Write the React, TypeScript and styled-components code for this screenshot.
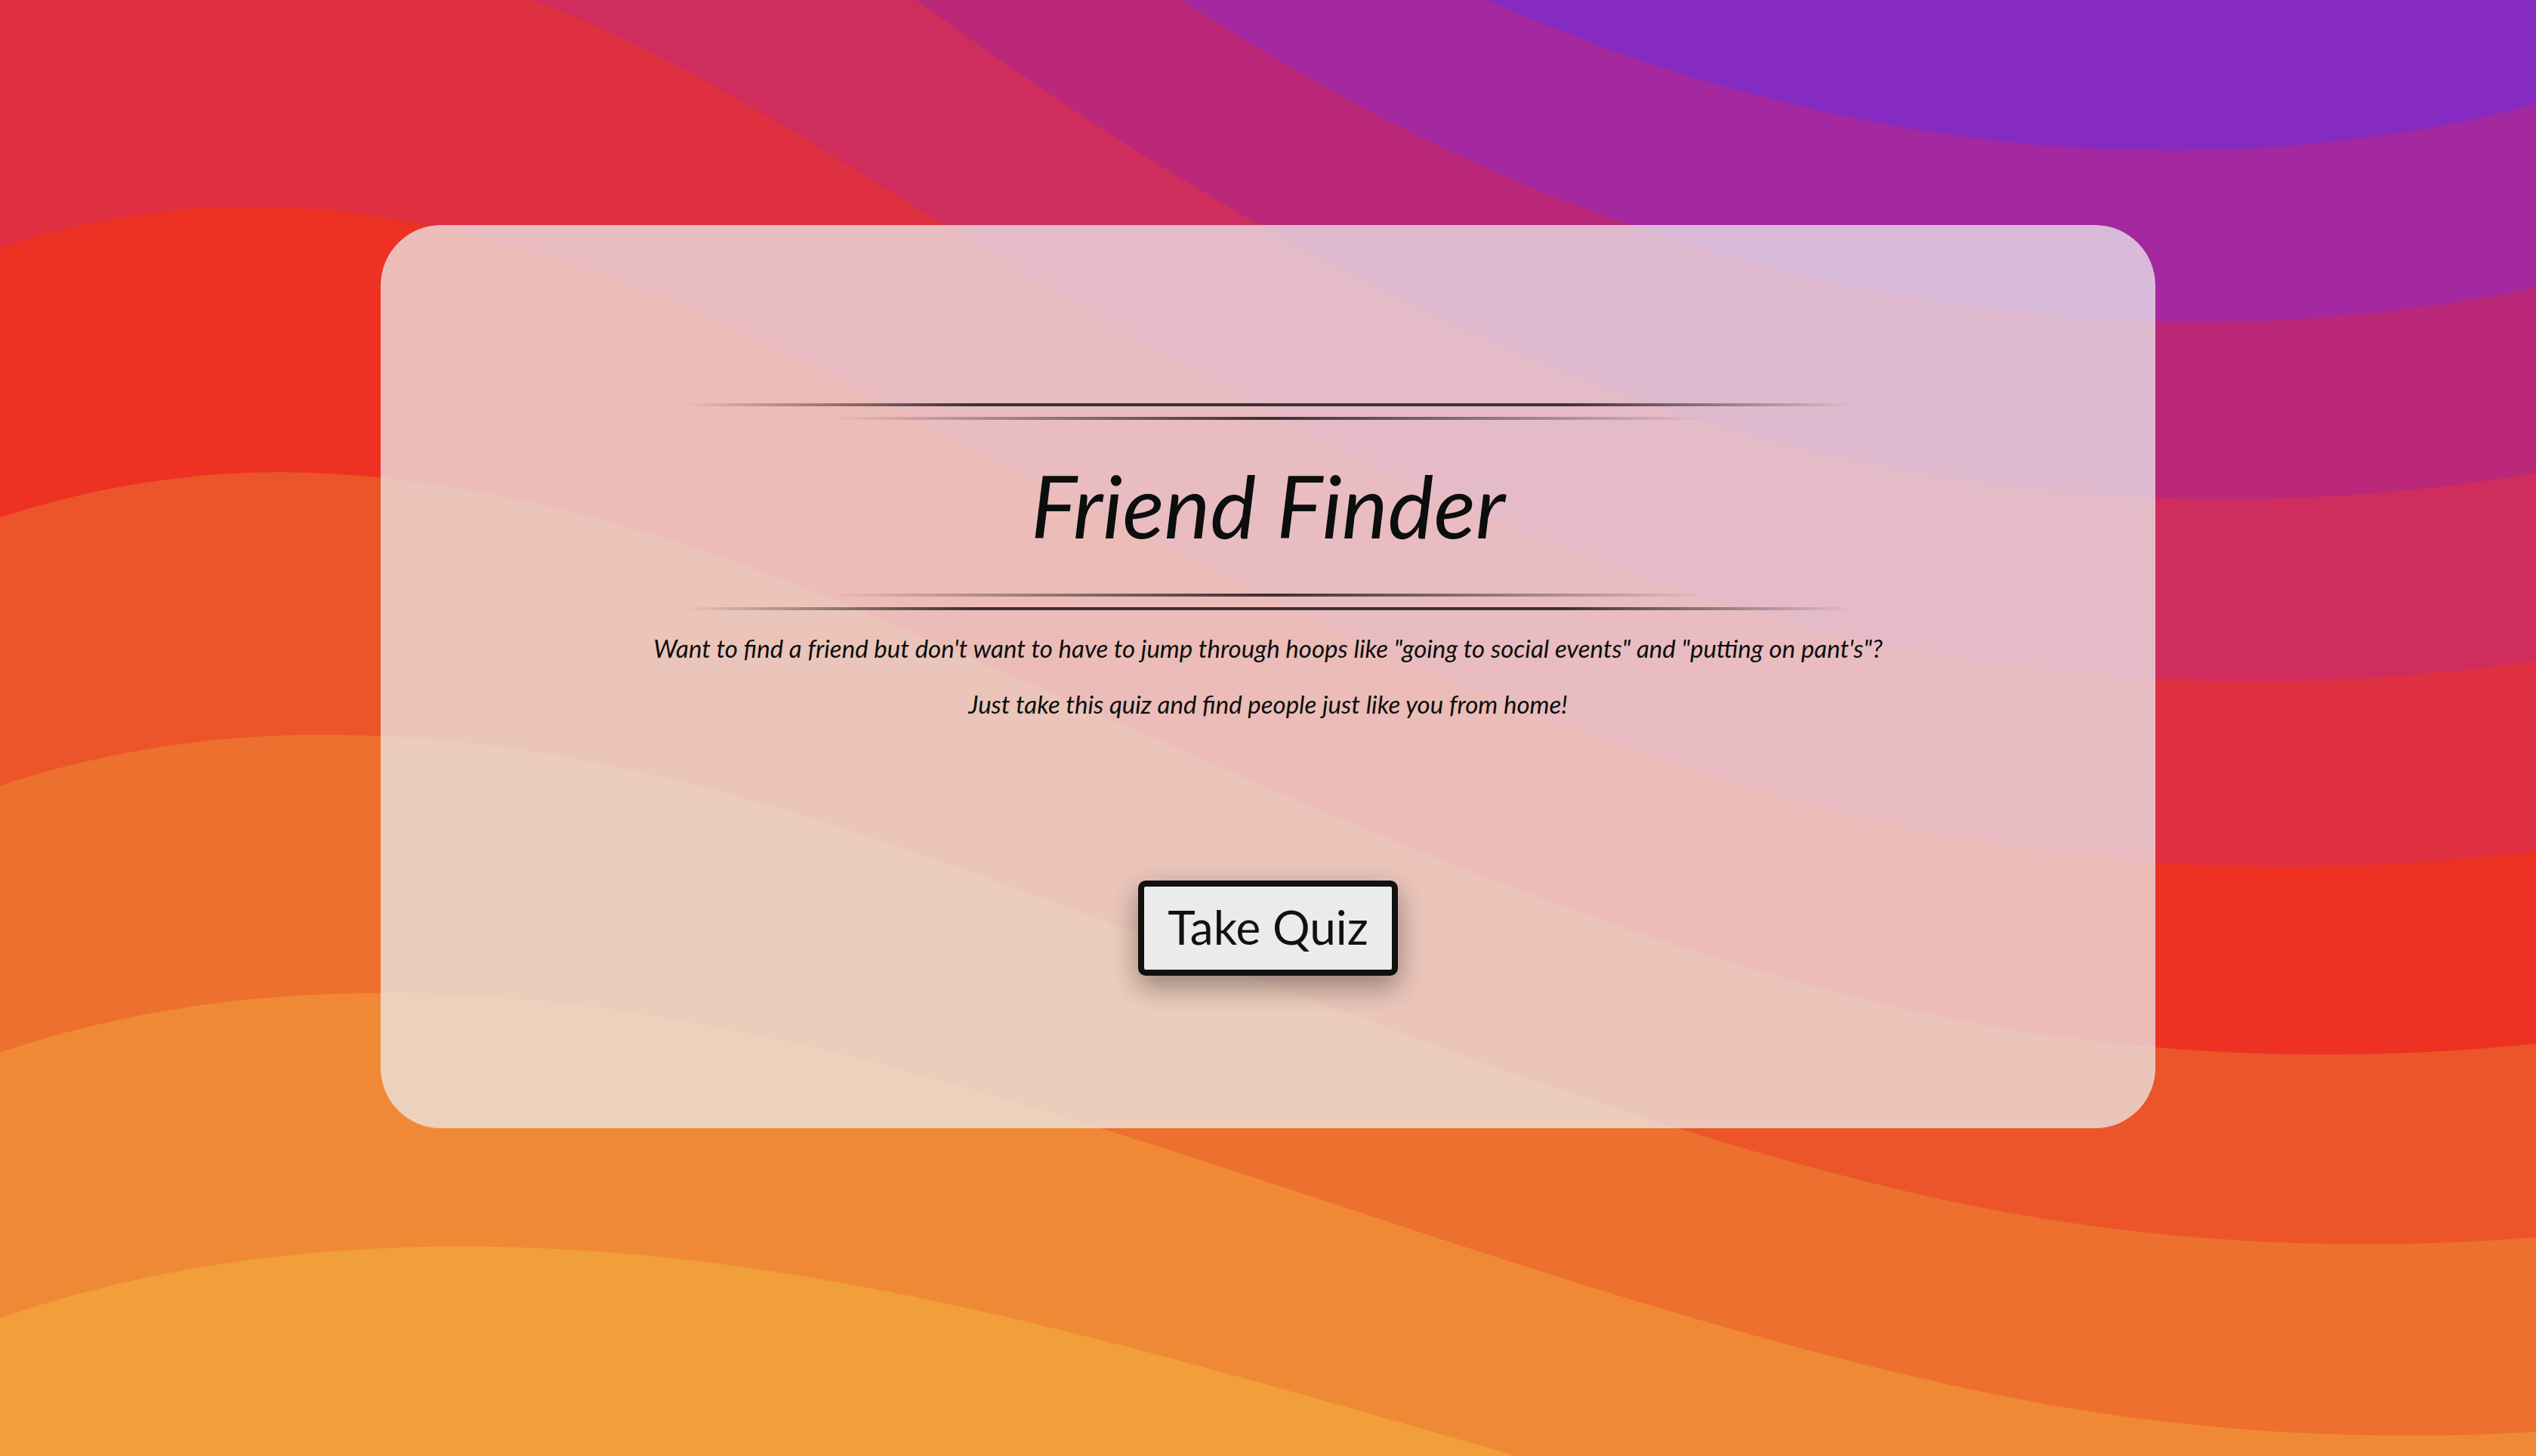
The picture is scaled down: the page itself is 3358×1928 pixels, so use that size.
import React from "react";
import styled, { createGlobalStyle } from "styled-components";

const GlobalStyle = createGlobalStyle`
  *, *::before, *::after { box-sizing: border-box; }
  body { margin: 0; }
`;

const Page = styled.div`
  display: grid;
  grid-template-columns: minmax(0, 1fr);
  grid-template-rows: minmax(100vh, auto);
  background: #f08935;
  font-family: Lato, "Open Sans", sans-serif;
  color: #0b0e0d;
`;

const Waves = styled.svg`
  grid-area: 1 / 1;
  display: block;
  width: 100%;
  height: 100%;
  min-height: 0;
`;

const Content = styled.main`
  grid-area: 1 / 1;
  padding: 298px 15% 64px;
`;

const Card = styled.section`
  display: flex;
  flex-direction: column;
  align-items: center;
  padding: 236px 64px 202px;
  border-radius: 80px;
  background: rgba(235, 235, 235, 0.75);
  text-align: center;
`;

const Banner = styled.header`
  display: flex;
  flex-direction: column;
  align-items: center;
  gap: 14px;
  width: 1548px;
  max-width: 100%;
`;

const Rule = styled.hr<{ $inner?: boolean }>`
  width: ${(p) => (p.$inner ? "75%" : "100%")};
  height: 4px;
  margin: 0;
  border: 0;
  background: ${(p) =>
    p.$inner
      ? "linear-gradient(to right, transparent, rgba(0, 0, 0, 0.75) 50%, transparent)"
      : "linear-gradient(to right, transparent, rgba(0, 0, 0, 0.75) 25%, rgba(0, 0, 0, 0.75) 75%, transparent)"};
`;

const Title = styled.h1`
  margin: 0;
  padding: 18px 0 24px;
  font-size: 115px;
  font-style: italic;
  font-weight: 400;
  line-height: 160px;
`;

const Intro = styled.div`
  display: flex;
  flex-direction: column;
  gap: 30px;
  padding-top: 28px;
`;

const Line = styled.p`
  margin: 0;
  font-size: 33px;
  font-style: italic;
  line-height: 44px;
`;

const QuizButton = styled.button`
  margin-top: 212px;
  width: 344px;
  height: 126px;
  padding: 0 0 4px;
  border: 8px solid #111;
  border-radius: 10px;
  background: #ebebeb;
  box-shadow: 0 16px 32px rgba(0, 0, 0, 0.2), 0 12px 40px rgba(0, 0, 0, 0.19);
  color: #111;
  font-family: inherit;
  font-size: 62px;
  line-height: 80px;
  cursor: pointer;
`;

const bands = [
  { fill: "#f08935", d: "M1600 0H0v719.8c49-16.8 99.5-27.8 150.7-33.5c111.9-12.7 226-2.4 335.3 19.4c3.4 0.7 6.8 1.4 10.2 2c116.8 24 231.7 59 347.6 92.2H1600V0z" },
  { fill: "#ed702e", d: "M478.4 581c3.2 0.8 6.4 1.7 9.5 2.5c196.2 52.5 388.7 133.5 593.5 176.6c174.2 36.6 349.5 29.2 518.6-10.2V0H0v574.9c52.3-17.6 106.5-27.7 161.1-30.9C268.4 537.4 375.7 554.2 478.4 581z" },
  { fill: "#ec5529", d: "M0 0v429.4c55.6-18.4 113.5-27.3 171.4-27.7c102.8-0.8 203.2 22.7 299.3 54.5c3 1 5.9 2 8.9 3c183.6 62 365.7 146.1 562.4 192.1c186.7 43.7 376.3 34.4 557.9-12.6V0H0z" },
  { fill: "#ed3123", d: "M181.8 259.4c98.2 6 191.9 35.2 281.3 72.1c2.8 1.1 5.5 2.3 8.3 3.4c171 71.6 342.7 158.5 531.3 207.7c198.8 51.8 403.4 40.8 597.3-14.8V0H0v283.2C59 263.6 120.6 255.7 181.8 259.4z" },
  { fill: "#de3040", d: "M1600 0H0v136.3c62.3-20.9 127.7-27.5 192.2-19.2c93.6 12.1 180.5 47.7 263.3 89.6c2.6 1.3 5.1 2.6 7.7 3.9c158.4 81.1 319.7 170.9 500.3 223.2c210.5 61 430.8 49 636.6-16.6V0z" },
  { fill: "#cf2d5d", d: "M454.9 86.3C600.7 177 751.6 269.3 924.1 325c208.6 67.4 431.3 60.8 637.9-5.3c12.8-4.1 25.4-8.4 38.1-12.9V0H288.1c56 21.3 108.7 50.6 159.7 82C450.2 83.4 452.5 84.9 454.9 86.3z" },
  { fill: "#bb2879", d: "M1600 0H498c118.1 85.8 243.5 164.5 386.8 216.2c191.8 69.2 400 74.7 595 21.1c40.8-11.2 81.1-25.2 120.3-41.7V0z" },
  { fill: "#a4289f", d: "M1397.5 154.8c47.2-10.6 93.6-25.3 138.6-43.8c21.7-8.9 43-18.8 63.9-29.5V0H643.4c62.9 41.7 129.7 78.2 202.1 107.4C1020.4 178.1 1214.2 196.1 1397.5 154.8z" },
  { fill: "#852bc1", d: "M1315.3 72.4c75.3-12.6 148.9-37.1 216.8-72.4h-723C966.8 71 1144.7 101 1315.3 72.4z" },
];

export default function App() {
  return (
    <>
      <GlobalStyle />
      <Page>
        <Waves viewBox="0 1 1384 794" preserveAspectRatio="xMinYMin slice" aria-hidden="true">
          <rect width="1600" height="800" fill="#f19f3b" />
          {bands.map((band) => (
            <path key={band.fill} fill={band.fill} d={band.d} />
          ))}
        </Waves>
        <Content>
          <Card>
            <Banner>
              <Rule />
              <Rule $inner />
              <Title>Friend Finder</Title>
              <Rule $inner />
              <Rule />
            </Banner>
            <Intro>
              <Line>
                Want to find a friend but don't want to have to jump through hoops like "going to social events" and
                "putting on pant's"?
              </Line>
              <Line>Just take this quiz and find people just like you from home!</Line>
            </Intro>
            <QuizButton type="button">Take Quiz</QuizButton>
          </Card>
        </Content>
      </Page>
    </>
  );
}
